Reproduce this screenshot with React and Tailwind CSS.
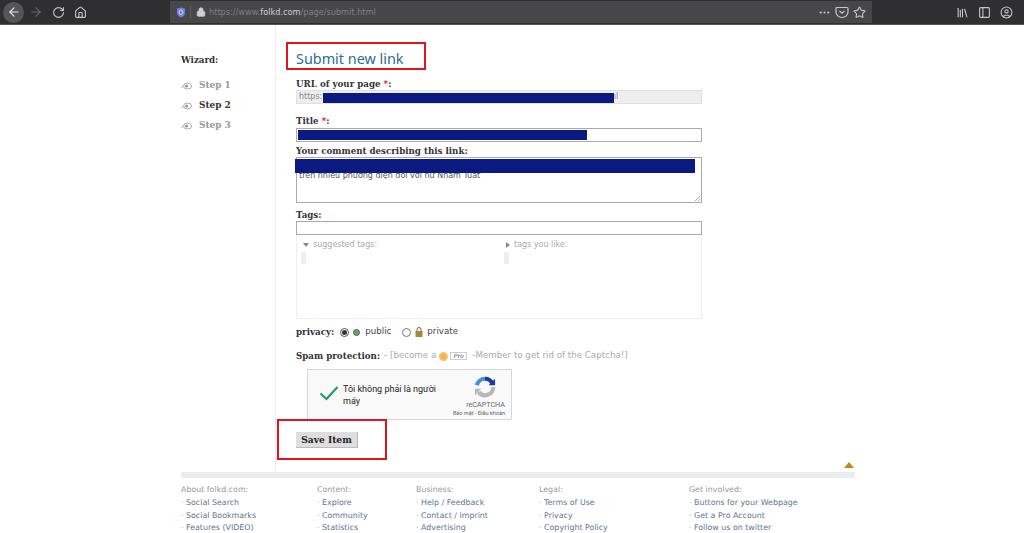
import React from 'react';
import { ArrowLeft, ArrowRight, RotateCw, Home, Lock, Ellipsis, Star, Library, PanelLeft, CircleUser } from 'lucide-react';

const sans = { fontFamily: '"DejaVu Sans", sans-serif' };
const serif = { fontFamily: '"DejaVu Serif", serif' };

const Toolbar = () => (
    <div className="h-[25px] shrink-0 bg-[#2f2f31] border-b border-[#555] flex items-center text-[#c8c8ca]">
        <div className="w-[170px] flex items-center">
            <div className="ml-[3px] w-[21px] h-[21px] rounded-full bg-[#555558] flex items-center justify-center">
                <ArrowLeft size={14} className="text-[#e8e8e8]" />
            </div>
            <ArrowRight size={14} className="ml-[5px] text-[#66666a]" />
            <RotateCw size={13} className="ml-[9px]" />
            <Home size={13} className="ml-[9px]" />
        </div>
        <div className="w-[702px] h-[22px] bg-[#47474a] flex items-center pl-[6px] text-[8.2px] text-[#808083]" style={sans}>
            <svg width="10" height="11" viewBox="0 0 10 11">
                <path d="M1 1.5L5 .5l4 1V6c0 2.4-2 3.8-4 4.5C3 9.8 1 8.4 1 6z" fill="#6f7fd8" />
                <path d="M5 3c1.3 0 1.8.8 1.8 2.2S6.3 7.5 5 7.5 3.2 6.6 3.2 5.2 3.7 3 5 3z" fill="none" stroke="#dfe3ff" strokeWidth=".9" />
            </svg>
            <div className="ml-[4px] w-px h-[12px] bg-[#5c5c5f]" />
            <Lock size={10} fill="#cfcfd0" className="ml-[5px] text-[#cfcfd0]" />
            <span className="ml-[3px]">https://www.<span className="text-[#d0d0d0]">folkd.com</span>/page/submit.html</span>
            <div className="ml-auto mr-[6px] flex items-center gap-[4px] text-[#c8c8ca]">
                <Ellipsis size={13} />
                <svg width="14" height="14" viewBox="0 0 14 14" fill="none" stroke="currentColor" strokeWidth="1.2">
                    <path d="M2 2.5h10a1 1 0 0 1 1 1V7a6 5.5 0 0 1-12 0V3.5a1 1 0 0 1 1-1z" />
                    <path d="M4.5 6l2.5 2.2L9.5 6" />
                </svg>
                <Star size={13} />
            </div>
        </div>
        <div className="ml-auto mr-[11px] flex items-center gap-[9px]">
            <Library size={13} />
            <PanelLeft size={13} />
            <CircleUser size={13} />
        </div>
    </div>
);

const Eye = () => (
    <svg width="11" height="8" viewBox="0 0 11 8" className="shrink-0">
        <ellipse cx="6.5" cy="4" rx="4" ry="3" fill="none" stroke="#aaa" strokeWidth="1" />
        <circle cx="5.5" cy="4" r="1.6" fill="#999" />
        <path d="M0 6l3-2" stroke="#bbb" strokeWidth="1" />
    </svg>
);

const Step = ({ label, active }) => (
    <div className="h-[20px] flex items-center gap-[7px]">
        <Eye />
        <span className={`text-[8.9px] font-bold ${active ? 'text-[#333]' : 'text-[#999]'}`} style={serif}>{label}</span>
    </div>
);

const Label = ({ children, className = '' }) => (
    <div className={`text-[8.7px] leading-[12px] font-bold text-[#333] whitespace-nowrap ${className}`} style={serif}>{children}</div>
);

const Req = () => <span className="text-[#c22]">*</span>;

const FooterCol = ({ title, links, className }) => (
    <div className={`${className} shrink-0 text-[7.9px] leading-[12.8px]`} style={sans}>
        <div className="text-[#999]">{title}</div>
        {links.map((l) => (
            <div key={l} className="text-[#5f7590] whitespace-nowrap"><span className="text-[#999]">· </span>{l}</div>
        ))}
    </div>
);

const App = () => (
    <div className="relative w-[1024px] h-[533px] overflow-hidden bg-white flex flex-col" style={sans}>
        <Toolbar />

        <div className="ml-[181px] w-[674px] flex h-[447px] shrink-0">
            {/* wizard */}
            <div className="w-[95px] shrink-0 border-r border-dotted border-[#ddd] pt-[29px]">
                <Label className="mb-[10px]">Wizard:</Label>
                <Step label="Step 1" />
                <Step label="Step 2" active />
                <Step label="Step 3" />
            </div>

            {/* form */}
            <div className="pl-[20px] w-[426px] shrink-0">
                <h1 className="mt-[24px] h-[20px] text-[14.4px] leading-[20px] text-[#2b6f8e]" style={{ fontFamily: '"Noto Sans", sans-serif' }}>Submit new link</h1>

                <Label className="mt-[9px]">URL of your page <Req />:</Label>
                <div className="relative h-[14px] bg-[#eee] border border-[#e0e0e0] text-[8px] leading-[12px] text-[#888] pl-[2px] overflow-hidden">
                    https:
                    <span className="absolute left-[314px] top-0">nl</span>
                    <div className="absolute left-[26px] top-[2px] w-[291px] h-[10px] bg-[#0a1a80]" />
                </div>

                <Label className="mt-[11px]">Title <Req />:</Label>
                <div className="mt-px h-[14px] bg-white border border-[#aaa] p-px">
                    <div className="w-[289px] h-[10px] bg-[#0a1a80]" />
                </div>

                <Label className="mt-[3px]">Your comment describing this link:</Label>
                <div className="relative h-[46px] bg-white border border-[#aaa] text-[8px] text-[#555] pl-[2px] pt-[12px] leading-[12px]">
                    trên nhiều phương diện đối với nữ Nhâm Tuất
                    <div className="absolute left-[-2px] top-[1px] w-[400px] h-[14px] bg-[#0a1a80]" />
                    <svg width="6" height="6" viewBox="0 0 6 6" className="absolute right-[1px] bottom-[1px]">
                        <path d="M1 6l5-5M4 6l2-2" stroke="#999" strokeWidth="0.8" />
                    </svg>
                </div>

                <Label className="mt-[6px]">Tags:</Label>
                <div className="h-[14px] bg-white border border-[#aaa]" />

                <div className="h-[84px] border border-t-0 border-[#eee] flex text-[8px] text-[#aaa] pl-[6px] pt-[5px]">
                    <div className="w-[203px]">
                        <div className="flex items-center gap-[4px] h-[10px]">
                            <span className="w-0 h-0 border-l-[3px] border-r-[3px] border-t-[4px] border-l-transparent border-r-transparent border-t-[#888]" />
                            suggested tags:
                        </div>
                        <div className="mt-[2px] -ml-[2px] w-[5px] h-[12px] bg-[#eee]" />
                    </div>
                    <div>
                        <div className="flex items-center gap-[4px] h-[10px]">
                            <span className="w-0 h-0 border-t-[3px] border-b-[3px] border-l-[4px] border-t-transparent border-b-transparent border-l-[#888]" />
                            tags you like:
                        </div>
                        <div className="mt-[2px] -ml-[2px] w-[5px] h-[12px] bg-[#eee]" />
                    </div>
                </div>

                <div className="mt-[7px] h-[12px] flex items-center text-[8.7px] text-[#444]">
                    <Label>privacy:</Label>
                    <span className="ml-[6px] w-[9px] h-[9px] rounded-full border border-[#555] flex items-center justify-center">
                        <span className="w-[5px] h-[5px] rounded-full bg-[#333]" />
                    </span>
                    <span className="ml-[4px] w-[7px] h-[7px] rounded-full bg-[#6f9a78] border border-[#4c6b52]" />
                    <span className="ml-[5px]">public</span>
                    <span className="ml-[11px] w-[9px] h-[9px] rounded-full border border-[#777]" />
                    <svg width="8" height="10" viewBox="0 0 8 10" className="ml-[4px]">
                        <path d="M2 4V2.5a2 2 0 0 1 4 0V4" fill="none" stroke="#665" strokeWidth="1" />
                        <rect x="0.5" y="4" width="7" height="6" fill="#a8873a" />
                    </svg>
                    <span className="ml-[4px]">private</span>
                </div>

                <div className="mt-[12px] h-[12px] flex items-center text-[8.7px] text-[#aaa] whitespace-nowrap">
                    <Label>Spam protection:</Label>
                    <span className="ml-[4px]">- [become a</span>
                    <span className="ml-[3px] w-[9px] h-[9px] rounded-full bg-[#f2b04a] border-2 border-[#f5c26b]" />
                    <span className="ml-[2px] w-[17px] h-[8px] border border-[#ccc] text-[6px] leading-[6px] text-[#555] italic text-center">Pro</span>
                    <span className="ml-[5px]">-Member to get rid of the Captcha!]</span>
                </div>

                {/* captcha */}
                <div className="relative ml-[11px] mt-[7px] w-[205px] h-[51px] bg-[#f9f9f9] border border-[#d6d6d6] flex">
                    <svg width="20" height="16" viewBox="0 0 20 16" className="ml-[11px] mt-[15px] shrink-0">
                        <path d="M1.5 8.5l6 5.5L18.5 2" fill="none" stroke="#1e9e67" strokeWidth="2.2" />
                    </svg>
                    <div className="ml-[4px] mt-[13px] w-[108px] text-[9px] leading-[12px] text-[#222]" style={{ fontFamily: '"Roboto", sans-serif' }}>Tôi không phải là người máy</div>
                    <div className="absolute right-[6px] top-[6px] w-[56px] flex flex-col items-end" style={{ fontFamily: '"Roboto", sans-serif' }}>
                        <svg width="22" height="22" viewBox="0 0 24 24" fill="none" strokeWidth="4.5" className="mr-[9px]">
                            <path d="M12 3a9 9 0 0 1 8 5" stroke="#1c3aa9" />
                            <path d="M3.2 10A9 9 0 0 1 12 3" stroke="#4a90e2" />
                            <path d="M21 12a9 9 0 0 1-16 5.6" stroke="#b8b8b8" />
                            <path d="M23 3v7h-7z" fill="#1c3aa9" stroke="none" />
                            <path d="M1 21v-7h7z" fill="#b8b8b8" stroke="none" />
                        </svg>
                        <div className="text-[7.2px] leading-[8px] mt-[3px] text-[#666]">reCAPTCHA</div>
                        <div className="text-[5.5px] leading-[8px] text-[#666] whitespace-nowrap">Bảo mật - Điều khoản</div>
                    </div>
                </div>

                <button className="block mt-[12px] w-[62px] h-[16px] bg-[#dedede] border-b border-r border-[#bbb] text-[9.1px] leading-[14px] font-bold text-[#222]" style={serif}>Save Item</button>
            </div>
        </div>

        {/* footer */}
        <div className="ml-[181px] w-[674px] shrink-0 relative">
            <div className="absolute right-[1px] top-[-10px] w-0 h-0 border-l-[5px] border-r-[5px] border-b-[6px] border-l-transparent border-r-transparent border-b-[#c9851d]" />
            <div className="h-[6px] bg-[#ececec]" />
            <div className="flex pt-[6px]">
                <FooterCol className="w-[136px]" title="About folkd.com:" links={['Social Search', 'Social Bookmarks', 'Features (VIDEO)']} />
                <FooterCol className="w-[99px]" title="Content:" links={['Explore', 'Community', 'Statistics']} />
                <FooterCol className="w-[123px]" title="Business:" links={['Help / Feedback', 'Contact / Imprint', 'Advertising']} />
                <FooterCol className="w-[150px]" title="Legal:" links={['Terms of Use', 'Privacy', 'Copyright Policy']} />
                <FooterCol className="w-[166px]" title="Get involved:" links={['Buttons for your Webpage', 'Get a Pro Account', 'Follow us on twitter']} />
            </div>
        </div>

        {/* red annotations */}
        <div className="absolute left-[286px] top-[42px] w-[140px] h-[28px] border-2 border-[#e0141c]" />
        <div className="absolute left-[277px] top-[419px] w-[110px] h-[41px] border-2 border-[#e0141c]" />
    </div>
);

export default App;
